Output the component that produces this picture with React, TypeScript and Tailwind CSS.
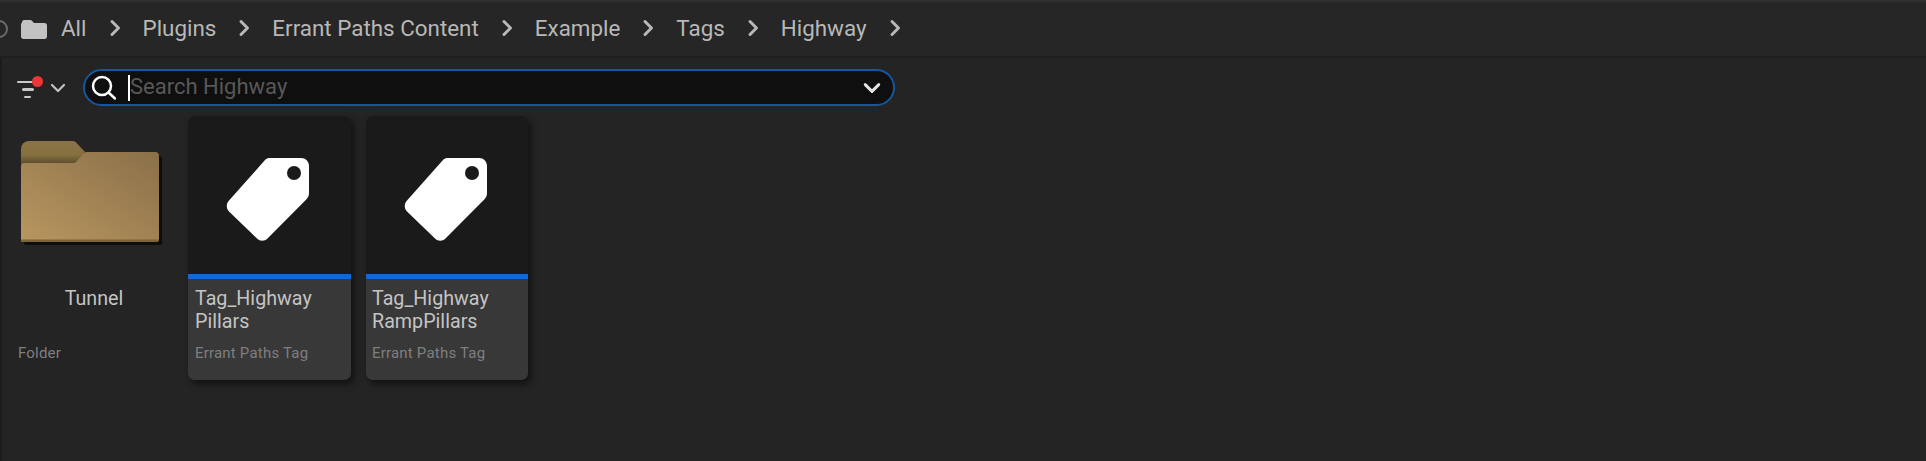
import React from 'react';

const crumbs = ['All', 'Plugins', 'Errant Paths Content', 'Example', 'Tags', 'Highway'];

const Chevron = ({ className }: { className?: string }) => (
  <svg viewBox="0 0 12 18" className={className} fill="none" stroke="currentColor" strokeWidth="3" strokeLinecap="round" strokeLinejoin="round">
    <path d="M3 2.500 9.500 9 3 15.500" />
  </svg>
);

const ChevronDown = ({ className, width = 2 }: { className?: string; width?: number }) => (
  <svg viewBox="0 0 16 10" className={className} fill="none" stroke="currentColor" strokeWidth={width} strokeLinecap="round" strokeLinejoin="round">
    <path d="M2 2l6 6 6-6" />
  </svg>
);

const FolderSmall = () => (
  <svg viewBox="0 0 26 20" className="w-[26px] h-[20px] shrink-0 text-[#c2c2c2]" fill="currentColor">
    <path d="M1 3.500C1 2.100 1.900 1 3.200 1h6.200c.6 0 1.100.2 1.500.7L13 4h10.600C25 4 26 5 26 6.400v11.200c0 1.300-1 2.400-2.400 2.400H2.400C1 20 0 19 0 17.600V5z" />
  </svg>
);

const FilterIcon = () => (
  <div className="relative w-[26px] h-[24px] shrink-0">
    <div className="flex flex-col items-center gap-[5px] pt-[5px] w-[21px]">
      <div className="w-[21px] h-[2.500px] rounded-full bg-[#c8c8c8]" />
      <div className="w-[12px] h-[2.500px] rounded-full bg-[#c8c8c8]" />
      <div className="w-[7px] h-[2.500px] rounded-full bg-[#c8c8c8]" />
    </div>
    <div className="absolute left-[15px] top-0 w-[11px] h-[11px] rounded-full bg-[#ee3535]" />
  </div>
);

const SearchIcon = () => (
  <svg viewBox="0 0 25 25" className="w-[25px] h-[25px] shrink-0 text-white" fill="none" stroke="currentColor" strokeWidth="2.500" strokeLinecap="round">
    <circle cx="11" cy="11" r="9" />
    <path d="M17.500 17.500 24 23.500" />
  </svg>
);

const TagIcon = () => (
  <svg viewBox="0 0 84 84" className="w-[84px] h-[84px] blur-[0.5px]">
    <path
      d="M44 1H75C79.500 1 83 4.500 83 9V36C83 38.500 82.200 40.500 80.500 42.200L41.500 81.500C38.500 84.500 34 84.500 31 81.500L3 54.500C0 51.500 0 46.500 3 43.500L39 3C40.500 1.500 42 1 44 1Z"
      fill="#ffffff"
    />
    <circle cx="68" cy="16" r="7" fill="#1a1a1a" />
  </svg>
);

const FolderBig = () => (
  <svg viewBox="0 0 145 110" className="w-[145px] h-[110px]">
    <defs>
      <linearGradient id="folderBody" x1="0" y1="1" x2="1" y2="0">
        <stop offset="0" stopColor="#b8965f" />
        <stop offset="1" stopColor="#8a7049" />
      </linearGradient>
      <linearGradient id="folderTab" x1="0" y1="0" x2="0" y2="1">
        <stop offset="0" stopColor="#8d7448" />
        <stop offset="0.6" stopColor="#86703f" />
        <stop offset="1" stopColor="#5a4a2e" />
      </linearGradient>
    </defs>
    <path d="M4 28h60l8-12h68a3 3 0 0 1 2 3v84a2 2 0 0 1-2 2H6a2 2 0 0 1-2-2z" fill="#0d0d0d" />
    <path d="M1 9a8 8 0 0 1 8-8h43c2 0 3 .5 4 1.500L65 12l-9 12H1z" fill="url(#folderTab)" />
    <path d="M1 99V26a3 3 0 0 1 3-3h49c1.500 0 2.500-.5 3.500-1.500L64 13c.8-.7 1.500-1 2.500-1H135a4 4 0 0 1 4 4v83a3 3 0 0 1-3 3H3a2 2 0 0 1-2-2z" fill="url(#folderBody)" />
    <path d="M1 99.500h138a3 3 0 0 1-3 2.500H3a2 2 0 0 1-2-2z" fill="#7c6339" />
  </svg>
);

const TagCard = ({ line1, line2, width, pad }: { line1: string; line2: string; width: string; pad: string }) => (
  <div className={`${width} h-[264px] rounded-[7px] overflow-hidden flex flex-col shrink-0 shadow-[3px_4px_7px_rgba(0,0,0,0.55)]`}>
    <div className="h-[158px] bg-[#1a1a1a] flex items-start justify-center pr-[3px] pt-[41px]">
      <TagIcon />
    </div>
    <div className="h-[5px] bg-[#1666d8]" />
    <div className={`flex-1 bg-[#383838] ${pad} pt-[8px]`}>
      <div className="text-[19.700px] leading-[23px] text-[#c4c4c4]">{line1}</div>
      <div className="text-[19.700px] leading-[23px] text-[#c4c4c4]">{line2}</div>
      <div className="mt-[10px] text-[15px] leading-[20px] text-[#7f7f7f] tracking-[0.2px]">Errant Paths Tag</div>
    </div>
  </div>
);

export default function App() {
  return (
    <div className="w-[1926px] h-[461px] bg-[#242424] overflow-hidden font-['Roboto',sans-serif]">
      {/* Breadcrumb bar */}
      <div className="h-[58px] bg-[#262626] border-t-2 border-t-[#303030] border-b-2 border-b-[#1e1e1e] flex items-center">
        <div className="w-[9px] h-[18px] -ml-[1px] mr-[13px] rounded-r-full border-2 border-l-0 border-[#6a6a6a]" />
        <FolderSmall />
        <div className="flex items-center ml-[14px] -mt-[2px]">
          {crumbs.map((c) => (
            <React.Fragment key={c}>
              <span className="text-[22.400px] leading-[28px] text-[#b8b8b8]">{c}</span>
              <Chevron className="w-[12px] h-[18px] mx-[22px] text-[#b8b8b8]" />
            </React.Fragment>
          ))}
        </div>
      </div>

      <div className="border-l-2 border-l-[#1c1c1c] h-[403px]">
        {/* Search row */}
        <div className="flex items-center pt-[11px] pl-[15px]">
          <FilterIcon />
          <ChevronDown className="w-[16px] h-[10px] ml-[7px] text-[#c4c4c4]" width={2.2} />
          <div className="ml-[17px] w-[812px] h-[37px] rounded-full border-[2.500px] border-[#14579f] bg-[#0f0f0f] flex items-center pl-[6px] pr-[12px]">
            <SearchIcon />
            <div className="w-[2px] h-[26px] bg-white ml-[12px]" />
            <span className="flex-1 text-[22px] leading-[28px] -mt-[2px] text-[#585858]">Search Highway</span>
            <ChevronDown className="w-[18px] h-[12px] text-[#e4e4e4]" width={2.6} />
          </div>
        </div>

        {/* Asset grid */}
        <div className="flex pt-[10px] pl-[16px]">
          <div className="w-[170px] h-[264px] shrink-0 flex flex-col">
            <div className="pt-[24px] pl-[2px]">
              <FolderBig />
            </div>
            <div className="mt-[37px] w-[152px] text-center text-[19.700px] leading-[24px] text-[#c4c4c4]">Tunnel</div>
            <div className="mt-[32px] text-[15px] leading-[20px] text-[#7f7f7f] tracking-[0.2px]">Folder</div>
          </div>
          <div className="flex gap-[15px]">
            <TagCard line1="Tag_Highway" line2="Pillars" width="w-[163px]" pad="px-[7px]" />
            <TagCard line1="Tag_Highway" line2="RampPillars" width="w-[162px]" pad="px-[6px]" />
          </div>
        </div>
      </div>
    </div>
  );
}
